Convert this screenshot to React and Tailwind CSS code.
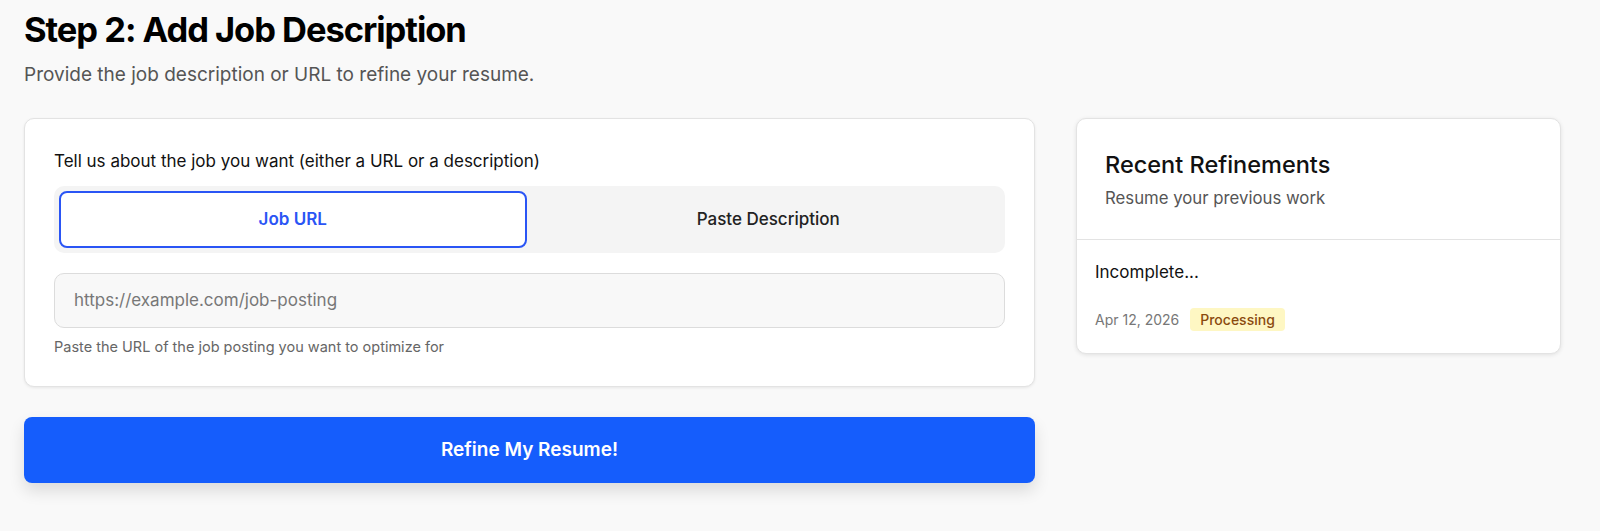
export default function App() {
  return (
    <div className="min-h-[531px] bg-[#f9f9f9] px-[24px] pt-[10px] font-['Inter','Liberation_Sans',sans-serif] text-[#111]">
      <h1 className="text-[34.5px] font-bold leading-[40px] tracking-[-0.03em] text-black">Step 2: Add Job Description</h1>
      <p className="mt-[12px] text-[19px] leading-[26px] text-[#555]">Provide the job description or URL to refine your resume.</p>

      <div className="mt-[30px] flex items-start gap-[41px]">
        <div className="w-[1011px] shrink-0">
          <div className="rounded-[10px] border border-[#e3e3e3] bg-white px-[29px] pt-[30px] pb-[29px] shadow-[0_1px_3px_rgba(0,0,0,0.08)]">
            <label className="block text-[17px] leading-[24px] text-[#111]">Tell us about the job you want (either a URL or a description)</label>
            <div className="mt-[13px] flex gap-[10px] rounded-[10px] bg-[#f4f4f4] p-[5px]">
              <button className="h-[57px] flex-1 rounded-[8px] border-2 border-[#2a55f5] bg-white text-[17px] font-semibold text-[#2a55f5]">Job URL</button>
              <button className="h-[57px] flex-1 rounded-[8px] text-[17px] font-medium text-[#222]">Paste Description</button>
            </div>
            <div className="mt-[20px] flex h-[55px] items-center rounded-[10px] border border-[#dcdcdc] bg-[#f8f8f8] px-[19px] text-[17px] text-[#777]">
              https://example.com/job-posting
            </div>
            <p className="mt-[9px] text-[14.5px] leading-[20px] text-[#666]">Paste the URL of the job posting you want to optimize for</p>
          </div>

          <button className="mt-[30px] flex h-[66px] w-full items-center justify-center rounded-[8px] bg-[#155dfc] text-[19px] font-semibold text-white shadow-[0_8px_16px_rgba(0,0,0,0.12)]">
            Refine My Resume!
          </button>
        </div>

        <div className="w-[485px] shrink-0 rounded-[10px] border border-[#e3e3e3] bg-white shadow-[0_1px_4px_rgba(0,0,0,0.1)]">
          <div className="border-b border-[#e3e3e3] px-[28px] pt-[31px] pb-[29px]">
            <h2 className="text-[23.5px] font-medium leading-[30px] text-[#111]">Recent Refinements</h2>
            <p className="mt-[6px] text-[16.75px] leading-[24px] text-[#555]">Resume your previous work</p>
          </div>
          <div className="px-[18px] pt-[20px] pb-[22px]">
            <p className="text-[17px] leading-[24px] text-[#111]">Incomplete...</p>
            <div className="mt-[24px] flex h-[23px] items-center gap-[11px]">
              <span className="text-[14px] text-[#777]">Apr 12, 2026</span>
              <span className="flex h-[23px] items-center rounded-[4px] bg-[#fef7c3] px-[10px] text-[14px] font-medium text-[#8a4a0f]">Processing</span>
            </div>
          </div>
        </div>
      </div>
    </div>
  );
}
